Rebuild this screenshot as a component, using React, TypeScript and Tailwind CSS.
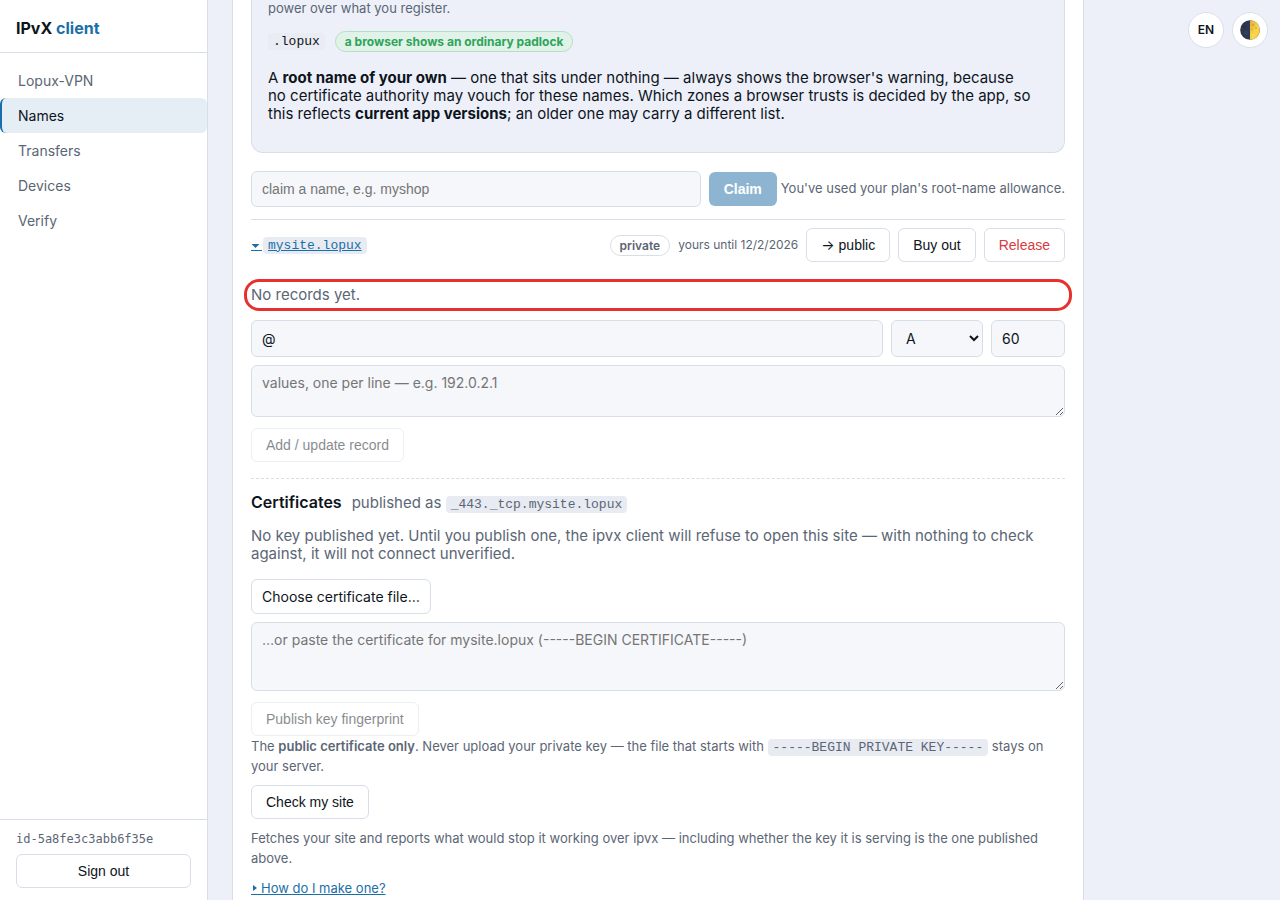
import type { ReactNode } from 'react'

const navItems = ['Lopux-VPN', 'Names', 'Transfers', 'Devices', 'Verify']

interface CodeProps {
  children: ReactNode;
  className?: string;
}

function Code({ children, className = '' }: CodeProps) {
  return (
    <code className={`rounded bg-[#e8ebf2] px-[5px] py-px font-['Liberation_Mono',monospace] text-[13px] leading-[15px] ${className}`}>
      {children}
    </code>
  )
}

interface ButtonProps {
  children: ReactNode;
  className?: string;
  disabled?: boolean;
}

function Button({ children, className = 'text-[#0e141b]', disabled }: ButtonProps) {
  return (
    <button
      type="button"
      disabled={disabled}
      className={`h-[34px] shrink-0 rounded-md border border-[#d8dee8] bg-white px-3.5 font-['Liberation_Sans',Arial,sans-serif] text-sm disabled:opacity-50 ${className}`}
    >
      {children}
    </button>
  )
}

function HalfMoon() {
  return (
    <svg viewBox="0 0 20 20" className="size-5" aria-hidden="true">
      <defs>
        <linearGradient id="lit" x1="0" y1="0" x2="1" y2="1">
          <stop offset="0" stopColor="#e2b040" />
          <stop offset="0.6" stopColor="#f9d84a" />
          <stop offset="1" stopColor="#f0c02b" />
        </linearGradient>
      </defs>
      <circle cx="10" cy="10" r="9.8" fill="#2d3850" />
      <path d="M10 .2a9.8 9.8 0 0 1 0 19.6z" fill="url(#lit)" />
      <circle cx="4.5" cy="7" r="1.6" fill="#26304a" />
      <circle cx="6" cy="13" r="2" fill="#35415b" />
      <circle cx="13" cy="5" r="1.5" fill="#dba938" />
      <circle cx="16" cy="8" r="1.2" fill="#e3b53a" />
      <circle cx="12" cy="9.5" r="1" fill="#dfae3a" />
      <path d="M11.5 13.5l2 3" stroke="#fdeb8b" strokeWidth="0.6" />
    </svg>
  )
}

function Sidebar() {
  return (
    <aside className="sticky top-0 flex h-screen w-52 shrink-0 flex-col border-r border-[#d8dee8] bg-white">
      <div className="border-b border-[#d8dee8] px-4 pt-[18px] pb-3.5 text-base leading-5 font-bold">
        IPvX <span className="text-[#1a6fa8]">client</span>
      </div>
      <nav className="flex flex-1 flex-col pt-2.5">
        {navItems.map((item) => (
          <a
            key={item}
            href="#"
            className={
              item === 'Names'
                ? 'rounded-md border-l-2 border-[#1a6fa8] bg-[#e6eef5] px-4 py-2 text-sm leading-[19px]'
                : 'rounded-md border-l-2 border-transparent px-4 py-2 text-sm leading-[19px] text-[#5b6675]'
            }
          >
            {item}
          </a>
        ))}
      </nav>
      <div className="flex flex-col gap-2 border-t border-[#d8dee8] px-4 py-3">
        <span className="font-['DejaVu_Sans_Mono',monospace] text-xs leading-[14px] text-[#5b6675]">id-5a8fe3c3abb6f35e</span>
        <Button>Sign out</Button>
      </div>
    </aside>
  )
}

function TrustPanel() {
  return (
    <section className="rounded-b-xl border border-t-0 border-[#d8dee8] bg-[#edf0f9] px-4 pb-[29px]">
      <p className="text-[13px] leading-4 text-[#5b6675]">power over what you register.</p>
      <div className="mt-[15px] flex items-center gap-2.5">
        <Code className="bg-[#e9ecf3]">.lopux</Code>
        <span className="rounded-full border border-[#b5dfc4] bg-[#e1f3e8] px-[9px] text-xs leading-[19px] font-bold text-[#2da45a]">
          a browser shows an ordinary padlock
        </span>
      </div>
      <p className="mt-[17px] text-[15px] leading-[18px]">
        A <b className="font-bold">root name of your own</b> — one that sits under nothing — always shows the browser's warning, because
        <br />
        no certificate authority may vouch for these names. Which zones a browser trusts is decided by the
        app, so this reflects <b className="font-bold">current app versions</b>; an older one may carry a different list.
      </p>
    </section>
  )
}

const field = 'rounded-md border border-[#d8dee8] bg-[#f5f7fb] px-2.5 text-sm placeholder:text-[#757575]'

function Records() {
  return (
    <div className="mt-6">
      <p className="rounded-lg text-[15px] leading-[18px] text-[#5b6675] outline-[3px] outline-offset-4 outline-[#e8302c]">
        No records yet.
      </p>
      <div className="mt-4 flex gap-2">
        <input aria-label="Record name" defaultValue="@" className={`h-[37px] min-w-0 flex-1 ${field}`} />
        <select aria-label="Record type" className={`h-[37px] w-[92px] ${field}`}>
          <option>A</option>
          <option>AAAA</option>
          <option>TXT</option>
        </select>
        <input aria-label="TTL" defaultValue="60" className={`h-[37px] w-[74px] ${field}`} />
      </div>
      <textarea
        aria-label="Record values"
        placeholder="values, one per line — e.g. 192.0.2.1"
        className={`mt-2 block h-[52px] w-full resize-y py-2 leading-[18px] ${field}`}
      />
      <div className="mt-[11px]">
        <Button disabled>Add / update record</Button>
      </div>
    </div>
  )
}

function Certificates() {
  return (
    <section className="mt-4 border-t border-dashed border-[#d8dee8] pt-[13px] text-[#5b6675]">
      <div className="flex items-baseline gap-2.5 leading-5">
        <h3 className="text-base leading-5 font-semibold text-[#0e141b]">Certificates</h3>
        <span className="text-[15px] leading-5">
          published as <Code>_443._tcp.mysite.lopux</Code>
        </span>
      </div>
      <p className="mt-3.5 text-[15px] leading-[18px]">
        No key published yet. Until you publish one, the ipvx client will refuse to open this site — with nothing to
        check against, it will not connect unverified.
      </p>
      <label className="mt-4 inline-block cursor-pointer rounded-md border border-[#d8dee8] px-2.5 py-2 text-sm leading-[17px] text-[#0e141b]">
        Choose certificate file…
        <input type="file" className="hidden" />
      </label>
      <textarea
        aria-label="Certificate"
        placeholder="…or paste the certificate for mysite.lopux (-----BEGIN CERTIFICATE-----)"
        className={`mt-2 block h-[69px] w-full resize-y py-2 leading-[18px] ${field}`}
      />
      <div className="mt-[11px] flex">
        <Button disabled>Publish key fingerprint</Button>
      </div>
      <p className="text-[13px] leading-5">
        The <b className="font-semibold">public certificate only</b>. Never upload your private key — the file that starts with{' '}
        <Code>-----BEGIN PRIVATE KEY-----</Code> stays on your server.
      </p>
      <div className="mt-[9px] flex">
        <Button>Check my site</Button>
      </div>
      <p className="mt-[9px] text-[13px] leading-5">
        Fetches your site and reports what would stop it working over ipvx — including whether the key it is serving is
        the one published above.
      </p>
      <a href="#" className="mt-2.5 inline-flex text-[13px] leading-5 text-[#1a6fa8] underline">
        <svg viewBox="0 0 10 20" className="h-5 w-2.5" aria-hidden="true">
          <path d="M2 7l4 3-4 3z" fill="currentColor" />
          <path d="M0 16.5h10" stroke="currentColor" />
        </svg>
        How do I make one?
      </a>
    </section>
  )
}

export default function App() {
  return (
    <div className="flex min-h-screen bg-[#edf0f9] font-[Inter,sans-serif] text-[#0e141b]">
      <Sidebar />
      <main className="flex max-w-[900px] min-w-0 flex-1 flex-col px-6">
        <div className="flex-1 border-x border-[#d8dee8] bg-white px-[18px]">
          <TrustPanel />
          <form className="mt-[18px] flex items-center gap-2">
            <input
              aria-label="Name to claim"
              placeholder="claim a name, e.g. myshop"
              className={`h-9 min-w-0 flex-1 font-['Liberation_Sans',Arial,sans-serif] ${field}`}
            />
            <div className="flex items-center gap-1">
              <button
                type="button"
                disabled
                className="h-[34px] rounded-md bg-[#8db5d1] px-[15px] font-['Liberation_Sans',Arial,sans-serif] text-sm font-bold text-white"
              >
                Claim
              </button>
              <span className="text-[13px] text-[#5b6675]">You've used your plan's root-name allowance.</span>
            </div>
          </form>
          <div className="mt-3 flex items-center gap-2 border-t border-[#d8dee8] pt-2">
            <a href="#" className="flex items-center text-[#1a6fa8]">
              <svg viewBox="0 0 12 12" className="size-3" aria-hidden="true">
                <path d="M.5 5h8l-4 4z" fill="currentColor" />
                <path d="M0 11.5h11" stroke="currentColor" />
              </svg>
              <Code className="underline">mysite.lopux</Code>
            </a>
            <span className="ml-auto rounded-full border border-[#d8dee8] px-[9px] text-xs leading-[19px] font-semibold text-[#5b6675]">
              private
            </span>
            <span className="text-xs text-[#5b6675]">yours until 12/2/2026</span>
            <Button>
              <span className="font-[Inter,sans-serif]">→</span> public
            </Button>
            <Button>Buy out</Button>
            <Button className="text-[#d93a3f]">Release</Button>
          </div>
          <Records />
          <Certificates />
        </div>
      </main>
      <div className="fixed top-3 right-3 flex gap-2">
        <button type="button" className="size-9 rounded-full border border-[#d8dee8] bg-white text-xs font-semibold">
          EN
        </button>
        <button
          type="button"
          aria-label="Toggle theme"
          className="flex size-9 items-center justify-center rounded-full border border-[#d8dee8] bg-white"
        >
          <HalfMoon />
        </button>
      </div>
    </div>
  )
}
